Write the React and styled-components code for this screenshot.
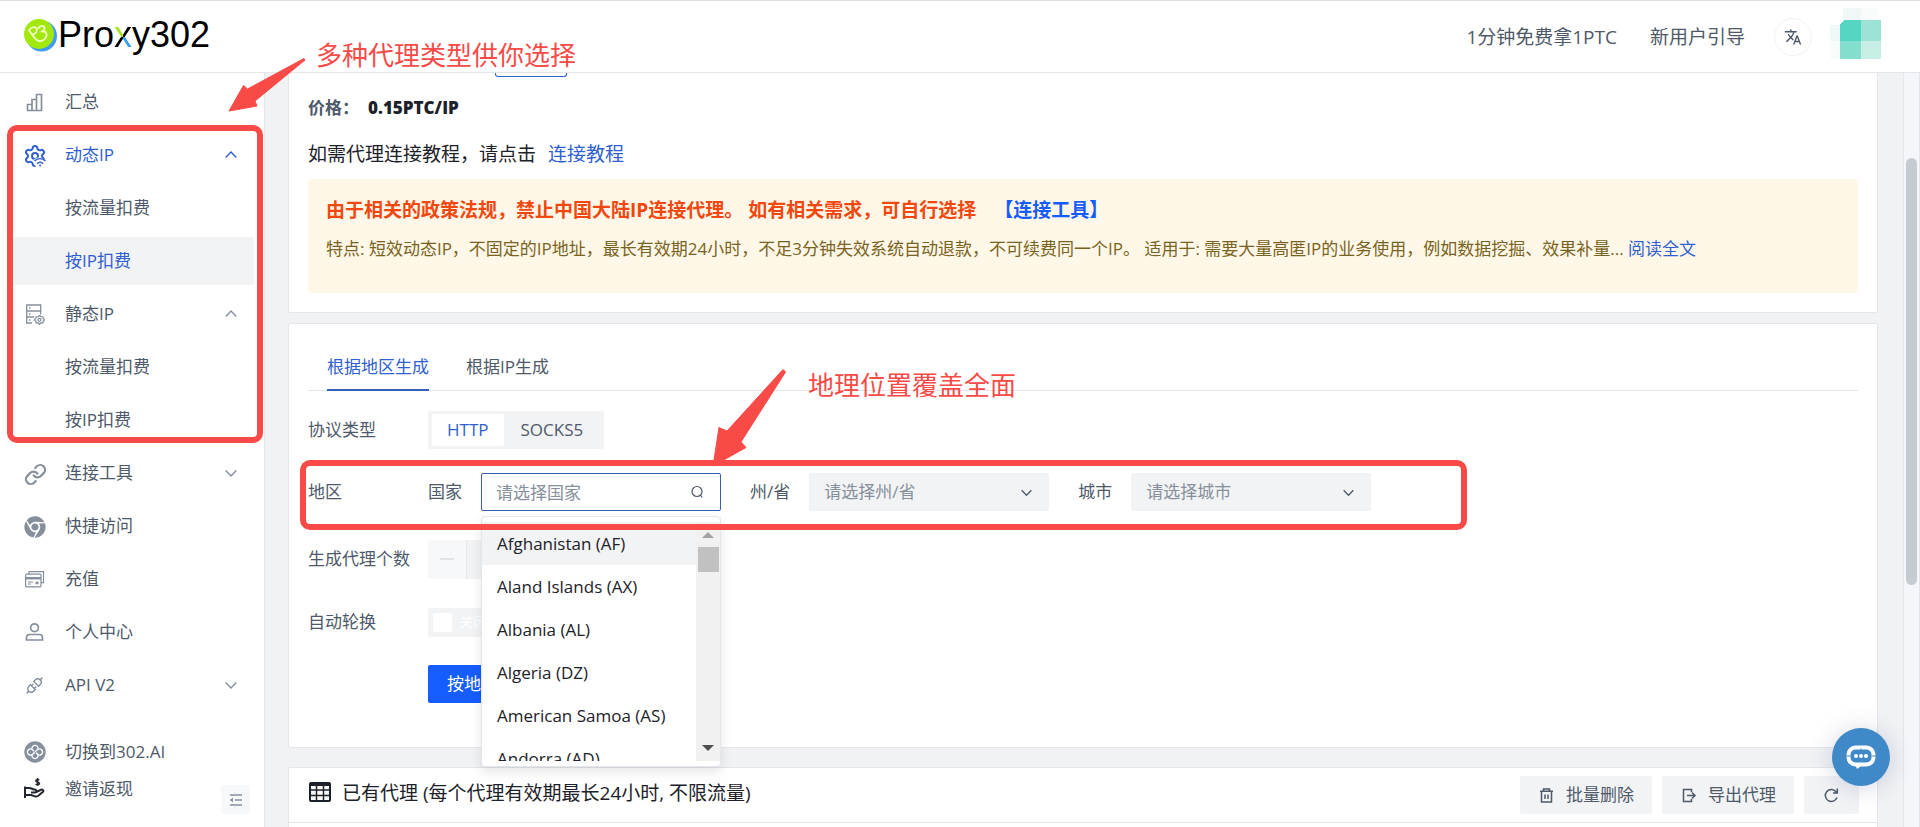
import React from "react";
import styled, { createGlobalStyle, css } from "styled-components";
import { Link as LinkIcon, Settings } from "lucide-react";
import { AiOutlineApi } from "react-icons/ai";
import { FaChrome } from "react-icons/fa";
import { MdTranslate } from "react-icons/md";

const FONT = '"Open Sans", "Noto Sans CJK SC", sans-serif';
const C = {
  text: "#1d2129",
  sub: "#4e5969",
  muted: "#86909c",
  line: "#e5e6eb",
  fill: "#f2f3f5",
  blue: "#2f5fd0",
  red: "#f84b48",
};

const GlobalStyle = createGlobalStyle`
  *, *::before, *::after { box-sizing: border-box; }
  body {
    margin: 0;
    font-family: ${FONT};
    font-size: 17px;
    line-height: 24px;
    color: ${C.sub};
    background: #f1f2f4;
  }
  button, input, select { font: inherit; color: inherit; margin: 0; }
  button { border: 0; padding: 0; background: none; cursor: pointer; }
  a { color: ${C.blue}; text-decoration: none; }
  ul { list-style: none; margin: 0; padding: 0; }
  h2, p { margin: 0; font-weight: 400; }
  svg { display: block; flex: none; }
`;

const Page = styled.div`
  position: relative;
  display: flex;
  flex-direction: column;
  height: 100vh;
  overflow: hidden;
`;

/* Header */
const Header = styled.header`
  flex: none;
  display: flex;
  align-items: center;
  height: 73px;
  padding: 0 39px 0 24px;
  background: #fff;
  border-top: 1px solid #dfdfe6;
  border-bottom: 1px solid ${C.line};
`;
const Brand = styled.a`
  display: flex;
  align-items: center;
  gap: 1px;
  margin: 0 auto 3px 0;
  font-family: "Liberation Sans", sans-serif;
  font-size: 36px;
  line-height: 46px;
  color: #000;
`;
const BrandX = styled.span`
  color: transparent;
  background: conic-gradient(from 0deg at 50% 56%, #000 0 25%, #3a9bf0 0 50%, #000 0 75%, #a4e21a 0);
  background-clip: text;
  -webkit-background-clip: text;
`;
const TopLink = styled.a`
  margin-right: 33px;
  font-size: 19px;
  color: ${C.sub};
`;
const RoundButton = styled.button`
  display: grid;
  place-items: center;
  width: 38px;
  height: 38px;
  margin: 0 18px 0 -4px;
  border: 1px solid ${C.fill};
  border-radius: 50%;
`;
const Avatar = styled.div`
  margin-bottom: 6px;
`;

/* Frame */
const Body = styled.div`
  flex: 1;
  min-height: 0;
  display: flex;
`;
const Sidebar = styled.nav`
  flex: none;
  display: flex;
  flex-direction: column;
  width: 265px;
  padding: 5px 10px 0;
  background: #fff;
  border-right: 1px solid ${C.line};
`;
const Menu = styled.ul`
  display: flex;
  flex-direction: column;
  gap: 5px;
`;
const MenuLink = styled.a`
  display: flex;
  align-items: center;
  height: ${(p) => (p.$short ? 37 : 48)}px;
  padding: 0 17px 0 14px;
  border-radius: 2px;
  color: ${(p) => (p.$active ? C.blue : C.sub)};
  background: ${(p) => (p.$current ? C.fill : "transparent")};
`;
const MenuIcon = styled.span`
  display: grid;
  place-items: center;
  width: 21px;
  height: 21px;
  margin-right: 20px;
  color: ${(p) => (p.$active ? C.blue : p.$dark ? "#23262e" : C.muted)};
`;
const MenuText = styled.span`
  flex: 1;
`;
const SideFoot = styled.div`
  position: relative;
  margin-top: 24px;
`;
const CollapseButton = styled.button`
  position: absolute;
  right: 4px;
  bottom: -7px;
  display: grid;
  place-items: center;
  width: 29px;
  height: 29px;
  border-radius: 2px;
  background: #f7f8fa;
  color: ${C.muted};
`;
const Main = styled.main`
  flex: 1;
  min-width: 0;
  display: flex;
  flex-direction: column;
  padding: 0 25px 0 23px;
  overflow: hidden;
`;
const Track = styled.div`
  flex: none;
  width: 17px;
  padding: 85px 2px 0;
  background: #f5f6fa;
  border-left: 1px solid ${C.line};
  border-right: 1px solid ${C.line};
`;
const Thumb = styled.div`
  width: 11px;
  height: 427px;
  border-radius: 6px;
  background: #c6cad1;
`;

/* Cards */
const Card = styled.section`
  flex: none;
  padding: 0 19px;
  background: #fff;
  border: 1px solid ${C.line};
  border-radius: 2px;
`;
const IntroCard = styled(Card)`
  height: 240px;
  border-top: 0;
  margin-bottom: 10px;
`;
const PlanChip = styled.div`
  width: 72px;
  height: 4px;
  margin-left: 187px;
  border: 1px solid ${C.blue};
  border-top: 0;
  border-radius: 0 0 3px 3px;
`;
const Price = styled.p`
  display: flex;
  gap: 9px;
  margin-top: 19px;
  font-weight: 700;
  color: ${C.sub};
`;
const PriceValue = styled.strong`
  color: ${C.text};
`;
const Guide = styled.p`
  display: flex;
  gap: 12px;
  margin-top: 22px;
  font-size: 19px;
  color: ${C.text};
`;
const Notice = styled.div`
  height: 114px;
  margin-top: 13px;
  padding: 19px 18px;
  border-radius: 2px;
  background: #fff7e8;
  color: #7a6320;
`;
const NoticeTitle = styled.p`
  display: flex;
  gap: 18px;
  margin-bottom: 15px;
  font-size: 19px;
  font-weight: 700;
  color: #f2480f;
`;
const NoticeLink = styled.a`
  color: #165dff;
`;

const FormCard = styled(Card)`
  height: 425px;
  margin-bottom: 19px;
  padding-top: 21px;
`;
const Tabs = styled.div`
  display: flex;
  gap: 37px;
  height: 46px;
  padding: 0 19px;
  border-bottom: 1px solid ${C.line};
`;
const Tab = styled.button`
  height: 46px;
  color: ${(p) => (p.$active ? C.blue : C.sub)};
  border-bottom: 2px solid ${(p) => (p.$active ? "#3560b4" : "transparent")};
`;
const FormRow = styled.div`
  display: flex;
  align-items: center;
  height: 38px;
  margin-top: ${(p) => p.$gap}px;
`;
const RowLabel = styled.label`
  flex: none;
  width: 120px;
`;
const Segment = styled.div`
  display: flex;
  height: 38px;
  padding: 3px 4px;
  border-radius: 2px;
  background: ${C.fill};
`;
const SegmentButton = styled.button`
  height: 32px;
  padding: 0 ${(p) => (p.$active ? 15 : 17)}px;
  border-radius: 2px;
  background: ${(p) => (p.$active ? "#fff" : "transparent")};
  color: ${(p) => (p.$active ? C.blue : C.sub)};
`;
const FieldLabel = styled.label`
  flex: none;
  margin-right: 19px;
`;
const Field = styled.div`
  position: relative;
  flex: none;
  display: flex;
  align-items: center;
  width: 240px;
  height: 38px;
  margin-right: 29px;
  padding-right: 16px;
  border-radius: 2px;
  border: 1px solid ${(p) => (p.$focus ? "#3560b4" : C.fill)};
  background: ${(p) => (p.$focus ? "#fff" : C.fill)};
  color: ${C.sub};
`;
const control = css`
  flex: 1;
  min-width: 0;
  height: 100%;
  padding: 0 0 0 14px;
  border: 0;
  outline: 0;
  appearance: none;
  background: transparent;
  color: ${C.muted};
`;
const FieldInput = styled.input`
  ${control}
  &::placeholder { color: ${C.muted}; opacity: 1; }
`;
const FieldSelect = styled.select`
  ${control}
`;
const Dropdown = styled.div`
  position: absolute;
  z-index: 2;
  top: 42px;
  left: -1px;
  display: flex;
  width: 240px;
  height: 251px;
  padding: 5px 0;
  border: 1px solid ${C.line};
  border-radius: 4px;
  background: #fff;
  box-shadow: 0 5px 12px rgba(0, 0, 0, 0.1);
`;
const Options = styled.ul`
  flex: 1;
  overflow: hidden;
`;
const Option = styled.li`
  height: 43px;
  padding-left: 15px;
  line-height: 43px;
  white-space: nowrap;
  color: ${C.text};
  background: ${(p) => (p.$active ? C.fill : "transparent")};
`;
const ListTrack = styled.div`
  display: flex;
  flex-direction: column;
  align-items: center;
  width: 24px;
  padding: 10px 0;
  background: #f1f1f1;
`;
const ListThumb = styled.div`
  width: 21px;
  height: 25px;
  margin: 9px 0 auto;
  background: #c1c1c1;
`;
const Stepper = styled.div`
  display: flex;
  width: 192px;
  height: 39px;
  border-radius: 2px;
  overflow: hidden;
  background: ${C.fill};
`;
const StepButton = styled.button`
  display: grid;
  place-items: center;
  width: 39px;
  border-right: 1px solid ${C.line};
  background: #f7f8fa;
  color: #c9cdd4;
`;
const StepInput = styled.input`
  flex: 1;
  min-width: 0;
  border: 0;
  text-align: center;
  background: transparent;
`;
const Switch = styled.button`
  display: flex;
  align-items: center;
  gap: 7px;
  width: 72px;
  height: 29px;
  padding: 0 5px;
  border-radius: 2px;
  background: ${C.fill};
  color: #fff;
  font-size: 14px;
  &::before {
    content: "";
    width: 19px;
    height: 19px;
    border-radius: 2px;
    background: #fff;
  }
`;
const PrimaryButton = styled.button`
  height: 38px;
  margin-left: 120px;
  padding: 0 19px;
  border-radius: 2px;
  background: #165dff;
  color: #fff;
`;

const ListCard = styled(Card)`
  height: 300px;
  padding: 0;
`;
const ListHead = styled.div`
  display: flex;
  align-items: center;
  gap: 10px;
  height: 55px;
  padding: 0 18px 0 20px;
  border-bottom: 1px solid ${C.line};
  color: ${C.text};
`;
const ListTitle = styled.h2`
  margin: 0 auto 4px 1px;
  font-size: 19px;
`;
const TitleIcon = styled.span`
  margin-bottom: 6px;
`;
const GrayButton = styled.button`
  display: flex;
  align-items: center;
  gap: 11px;
  height: 38px;
  padding: 0 ${(p) => (p.$square ? 19 : 18)}px;
  border-radius: 2px;
  background: ${C.fill};
  color: ${C.sub};
`;

/* Layers over the page */
const ChatButton = styled.button`
  position: absolute;
  right: 30px;
  bottom: 41px;
  display: grid;
  place-items: center;
  width: 58px;
  height: 58px;
  border-radius: 50%;
  background: #3f89c9;
  box-shadow: 0 2px 24px rgba(60, 70, 130, 0.22);
`;
const Marker = styled.div`
  position: absolute;
  z-index: 5;
  top: ${(p) => p.$top}px;
  left: ${(p) => p.$left}px;
  width: ${(p) => p.$w}px;
  height: ${(p) => p.$h}px;
  border: 6px solid ${C.red};
  border-radius: 10px;
  pointer-events: none;
`;
const MarkerText = styled.p`
  position: absolute;
  z-index: 5;
  top: ${(p) => p.$top}px;
  left: ${(p) => p.$left}px;
  font-size: 26px;
  line-height: 36px;
  color: ${C.red};
`;
const Arrows = styled.svg`
  position: absolute;
  z-index: 5;
  top: 0;
  left: 0;
  pointer-events: none;
`;

const Svg = ({ w = 21, h = w, box = "0 0 21 21", sw = 1.6, children }) => (
  <svg width={w} height={h} viewBox={box} fill="none" stroke="currentColor" strokeWidth={sw} aria-hidden="true">
    {children}
  </svg>
);

const Logo = () => (
  <svg width="33" height="34" viewBox="0 0 33 34" aria-hidden="true">
    <circle cx="17.500" cy="18" r="15.500" fill="#3f9cf0" />
    <circle cx="15" cy="16" r="15" fill="#a3e80c" />
    <g fill="none" stroke="#f3ffc9" strokeWidth="1.800" strokeLinecap="round" strokeLinejoin="round">
      <path d="M8.500 17 5 12.500c2-3.500 6-4.500 7.500-2 1.300 2.500-.5 5-3.500 5.800" />
      <path d="M14.500 10c2-3 5.500-2.500 6 0 .4 2-1.500 3.500-3 3.500 3-.8 5.500.8 5 4-.6 3-3.500 5.500-6.500 5.700-3 0-5-2-7.500-6.200" />
    </g>
  </svg>
);
const ChartIcon = () => (
  <Svg sw={1.7}>
    <path d="M3.500 18.500v-6h4.500v6M8 18.500V7.500h4.500v11M12.500 18.500V2.500h5v16M2.700 18.500h15.600" />
  </Svg>
);
const GearIcon = () => (
  <Svg w={22} box="0 0 22 22">
    <Settings x="-1" y="-1" width="24" height="24" strokeWidth={2} />
    <path d="M8.500 16.500c3-5.500 9-5.500 14.500 0V22H12z" fill="#fff" stroke="none" />
    <path d="M10.500 16c3.300-3 7.700-3 11 0M13 18.600c2-1.800 4.200-1.800 6.200 0M16.100 19.500v2" strokeWidth="1.500" />
  </Svg>
);
const ServerIcon = () => (
  <Svg sw={1.3}>
    <path d="M8 19H2.700V1h14v9.500M2.700 7h14M2.700 13h7.500M5 4h1.500M5 10h1.500M5 16h1.500" />
    <path d="m15.500 11.500 1.400 1.200 1.900.1.600 1.800 1.200 1.200-1.200 1.300-.6 1.800-1.900.1-1.400 1.100-1.400-1.100-1.900-.1-.6-1.800-1.200-1.300 1.200-1.200.6-1.800 1.900-.1z" />
    <circle cx="15.500" cy="15.800" r="1.500" />
  </Svg>
);
const CardsIcon = () => (
  <Svg sw={1.2}>
    <path d="M5 5V2.700h14.500v11H17" />
    <rect x="1.600" y="5.200" width="15.400" height="12.600" rx="1" />
    <path d="M1.600 9.200h15.400" strokeWidth="2.500" />
    <path d="M4 13h5M4 15h3" />
    <path d="M11.500 14h3" strokeWidth="2.500" />
  </Svg>
);
const UserIcon = () => (
  <Svg sw={1.7}>
    <circle cx="10.500" cy="5.700" r="3.900" />
    <path d="M2.500 18v-2.500a3 3 0 0 1 3-3h10a3 3 0 0 1 3 3V18z" />
  </Svg>
);
const SwitchIcon = () => (
  <svg width="22" height="22" viewBox="0 0 22 22" aria-hidden="true">
    <circle cx="11" cy="11" r="10.700" fill="currentColor" />
    <g fill="none" stroke="#fff" strokeWidth="1.300">
      <path d="M8 8.300a3.100 3.100 0 1 1 6 0 3.100 3.100 0 1 1 0 5.400 3.100 3.100 0 1 1-6 0 3.100 3.100 0 1 1 0-5.400" />
      <path d="M8 8.300c.6.900 1 1.500 2.200 1.700M14 13.700c-.6-.9-1-1.500-2.200-1.700M14 8.300c-1 .8-2 1-2.500 2.700M8 13.700c1-.8 2-1 2.500-2.700" />
    </g>
  </svg>
);
const InviteIcon = () => (
  <Svg sw={2}>
    <path d="M1 20V8.500M1 10h4.500c2 0 3 1.500 5 1.500 2.500 0 2.500 3-.5 3H7M11 14.500l5.500-2.500c2-1 3.500.3 2.500 1.700l-5 4.300c-1 .7-2 .7-3 .4l-4-1.400H1" />
    <path d="M15.300 2.200c-1-.8-3.500-.7-3.500.7 0 1.800 3.700.8 3.700 2.600 0 1.500-2.700 1.500-3.900.6M13.600 0v8" strokeWidth="1.500" />
  </Svg>
);
const Chevron = ({ up, size = 12, color = C.muted }) => (
  <svg width={size} height={size} viewBox="0 0 12 12" fill="none" stroke={color} strokeWidth="1.400" aria-hidden="true">
    <path d={up ? "M.7 8.500 6 3l5.300 5.500" : "M.7 3.500 6 9l5.300-5.500"} />
  </svg>
);
const Mosaic = () => (
  <svg width="51" height="51" viewBox="0 0 51 51" shapeRendering="crispEdges" aria-hidden="true">
    <path fill="#eff8f6" d="M13 0h18v12H13zM0 17h10v16H0z" />
    <path fill="#f8fcfb" d="M31 0h18v12H31zM0 33h10v18H0z" />
    <path fill="#55d6c2" d="M14 12h17v21H10V16z" />
    <path fill="#9de3d5" d="M31 12h20v21H31z" />
    <path fill="#84dece" d="M10 33h21v18H10z" />
    <path fill="#c6eee5" d="M31 33h20v18H31z" />
  </svg>
);

const MENU = [
  { text: "汇总", icon: <ChartIcon /> },
  { text: "动态IP", icon: <GearIcon />, arrow: "up", active: true },
  { text: "按流量扣费" },
  { text: "按IP扣费", active: true, current: true },
  { text: "静态IP", icon: <ServerIcon />, arrow: "up" },
  { text: "按流量扣费" },
  { text: "按IP扣费" },
  { text: "连接工具", icon: <LinkIcon size={23} strokeWidth={2.3} />, arrow: "down" },
  { text: "快捷访问", icon: <FaChrome size={22} /> },
  { text: "充值", icon: <CardsIcon /> },
  { text: "个人中心", icon: <UserIcon /> },
  { text: "API V2", icon: <AiOutlineApi size={21} />, arrow: "down" },
];
const COUNTRIES = [
  "Afghanistan (AF)",
  "Aland Islands (AX)",
  "Albania (AL)",
  "Algeria (DZ)",
  "American Samoa (AS)",
  "Andorra (AD)",
];

function MenuEntry({ text, icon, arrow, active, current, dark, short }) {
  return (
    <MenuLink href="#" $active={active} $current={current} $short={short}>
      <MenuIcon $active={active} $dark={dark}>{icon}</MenuIcon>
      <MenuText>{text}</MenuText>
      {arrow && <Chevron up={arrow === "up"} color={active ? C.blue : C.muted} />}
    </MenuLink>
  );
}

function SelectField({ id, label, placeholder }) {
  return (
    <>
      <FieldLabel htmlFor={id}>{label}</FieldLabel>
      <Field>
        <FieldSelect id={id} defaultValue="">
          <option value="">{placeholder}</option>
        </FieldSelect>
        <Chevron size={11} color={C.sub} />
      </Field>
    </>
  );
}

export default function App() {
  return (
    <Page>
      <GlobalStyle />
      <Header>
        <Brand href="#">
          <Logo />
          <span>Pro<BrandX>x</BrandX>y302</span>
        </Brand>
        <TopLink href="#">1分钟免费拿1PTC</TopLink>
        <TopLink href="#">新用户引导</TopLink>
        <RoundButton aria-label="语言"><MdTranslate size={18} /></RoundButton>
        <Avatar><Mosaic /></Avatar>
      </Header>

      <Body>
        <Sidebar>
          <Menu>
            {MENU.map((m, i) => (
              <li key={i}><MenuEntry {...m} /></li>
            ))}
          </Menu>
          <SideFoot>
            <MenuEntry text="切换到302.AI" icon={<SwitchIcon />} short />
            <MenuEntry text="邀请返现" icon={<InviteIcon />} dark short />
            <CollapseButton aria-label="收起菜单">
              <Svg w={14} box="0 0 14 14" sw={1.4}>
                <path d="M1 2h12M6 7h7M1 12h12" />
                <path d="M4 4.800v4.400L.6 7z" fill="currentColor" stroke="none" />
              </Svg>
            </CollapseButton>
          </SideFoot>
        </Sidebar>

        <Main>
          <IntroCard>
            <PlanChip />
            <Price>价格： <PriceValue>0.15PTC/IP</PriceValue></Price>
            <Guide>如需代理连接教程，请点击 <a href="#">连接教程</a></Guide>
            <Notice>
              <NoticeTitle>
                由于相关的政策法规，禁止中国大陆IP连接代理。 如有相关需求，可自行选择
                <NoticeLink href="#">【连接工具】</NoticeLink>
              </NoticeTitle>
              <p>
                特点: 短效动态IP，不固定的IP地址，最长有效期24小时，不足3分钟失效系统自动退款，不可续费同一个IP。 适用于: 需要大量高匿IP的业务使用，例如数据挖掘、效果补量... <a href="#">阅读全文</a>
              </p>
            </Notice>
          </IntroCard>

          <FormCard>
            <Tabs role="tablist">
              <Tab role="tab" aria-selected="true" $active>根据地区生成</Tab>
              <Tab role="tab" aria-selected="false">根据IP生成</Tab>
            </Tabs>
            <FormRow $gap={20}>
              <RowLabel as="span">协议类型</RowLabel>
              <Segment>
                <SegmentButton $active>HTTP</SegmentButton>
                <SegmentButton>SOCKS5</SegmentButton>
              </Segment>
            </FormRow>
            <FormRow $gap={24}>
              <RowLabel as="span">地区</RowLabel>
              <FieldLabel htmlFor="country">国家</FieldLabel>
              <Field $focus>
                <FieldInput id="country" placeholder="请选择国家" />
                <Svg w={14} box="0 0 14 14" sw={1.2}>
                  <circle cx="7" cy="6.500" r="5" />
                  <path d="m10.300 10 2 2.500" />
                </Svg>
                <Dropdown>
                  <Options role="listbox">
                    {COUNTRIES.map((c, i) => (
                      <Option key={c} role="option" $active={i === 0}>{c}</Option>
                    ))}
                  </Options>
                  <ListTrack>
                    <svg width="12" height="6" viewBox="0 0 12 6"><path d="M0 6 6 0l6 6z" fill="#a3a3a3" /></svg>
                    <ListThumb />
                    <svg width="12" height="6" viewBox="0 0 12 6"><path d="M0 0h12L6 6z" fill="#505050" /></svg>
                  </ListTrack>
                </Dropdown>
              </Field>
              <SelectField id="state" label="州/省" placeholder="请选择州/省" />
              <SelectField id="city" label="城市" placeholder="请选择城市" />
            </FormRow>
            <FormRow $gap={29}>
              <RowLabel htmlFor="count">生成代理个数</RowLabel>
              <Stepper>
                <StepButton aria-label="减少">
                  <Svg w={14} box="0 0 14 14" sw={1.2}><path d="M0 7h14" /></Svg>
                </StepButton>
                <StepInput id="count" defaultValue="1" />
              </Stepper>
            </FormRow>
            <FormRow $gap={25}>
              <RowLabel htmlFor="rotate">自动轮换</RowLabel>
              <Switch id="rotate" role="switch" aria-checked="false">关闭</Switch>
            </FormRow>
            <FormRow $gap={24}>
              <PrimaryButton>按地区生成</PrimaryButton>
            </FormRow>
          </FormCard>

          <ListCard>
            <ListHead>
              <TitleIcon>
                <Svg w={22} h={20} box="0 0 22 20" sw={2}>
                  <rect x="1" y="1" width="20" height="18" rx="1" />
                  <path d="M1 2.500h20" strokeWidth="3" />
                  <path d="M1 8h20M1 13.500h20M7.500 2v17M14.500 2v17" strokeWidth="1.500" />
                </Svg>
              </TitleIcon>
              <ListTitle>已有代理 (每个代理有效期最长24小时, 不限流量)</ListTitle>
              <GrayButton>
                <Svg w={17} box="0 0 17 17" sw={1.5}>
                  <path d="M2 4.200h13M5.500 4V2h6v2M3.500 4.500V15h10V4.500M7 7.500v4.500M10 7.500v4.500" />
                </Svg>
                批量删除
              </GrayButton>
              <GrayButton>
                <Svg w={17} box="0 0 17 17" sw={1.5}>
                  <path d="M11.500 5V2.500h-8v12h8V12M7 8.500h8M12 5.500l3 3-3 3" />
                </Svg>
                导出代理
              </GrayButton>
              <GrayButton $square aria-label="刷新">
                <Svg w={17} box="0 0 17 17" sw={1.5}>
                  <path d="M14 10.500a6 6 0 1 1-1-5.800l1 1M14.300 1.500V6H10" />
                </Svg>
              </GrayButton>
            </ListHead>
          </ListCard>
        </Main>
        <Track><Thumb /></Track>
      </Body>

      <ChatButton aria-label="客服">
        <svg width="30" height="24" viewBox="0 0 30 24" aria-hidden="true">
          <rect x="2.500" y="2.500" width="25" height="17" rx="7" fill="none" stroke="#fff" strokeWidth="4" />
          <path d="M9.500 20h7L11 24z" fill="#fff" />
          <path d="M0 11h4.500M25.500 11H30" stroke="#3f89c9" />
          <path d="M14 4.500 15 3l1 1.500z" fill="#3f89c9" />
          <g fill="#fff"><circle cx="10" cy="11" r="2" /><circle cx="15" cy="11" r="2" /><circle cx="20" cy="11" r="2" /></g>
        </svg>
      </ChatButton>

      <Marker $left={7} $top={125} $w={256} $h={318} />
      <Marker $left={300} $top={460} $w={1167} $h={70} />
      <MarkerText $left={316} $top={37}>多种代理类型供你选择</MarkerText>
      <MarkerText $left={808} $top={367}>地理位置覆盖全面</MarkerText>
      <Arrows width="800" height="480" viewBox="0 0 800 480" fill={C.red} stroke={C.red} strokeLinejoin="round" aria-hidden="true">
        <path d="M229 111 243.500 85.500 247.500 89 304 58.500 305 60 255 101 257 106z" />
        <path d="M713 466 719 427.500 727 431 783 369.500 785.500 372 741 442 746 447.500z" />
      </Arrows>
    </Page>
  );
}
